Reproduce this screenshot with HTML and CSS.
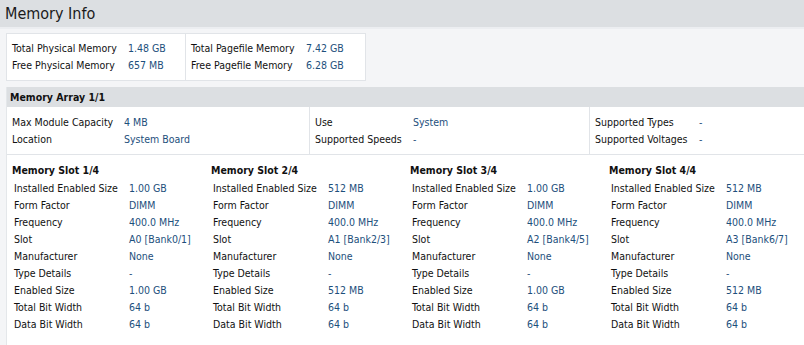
FILE: index.html
```html
<!DOCTYPE html>
<html lang="en">
<head>
    <meta charset="UTF-8">
    <title>Memory Info</title>
    <link rel="stylesheet" href="styles.css">
</head>
<body>
    <div class="title-bar">Memory Info</div>

    <div class="summary">
        <div class="summary-box">
            <div class="summary-cell">
                <span class="label">Total Physical Memory</span><span class="value">1.48 GB</span>
                <span class="label">Free Physical Memory</span><span class="value">657 MB</span>
            </div>
            <div class="summary-cell second">
                <span class="label">Total Pagefile Memory</span><span class="value">7.42 GB</span>
                <span class="label">Free Pagefile Memory</span><span class="value">6.28 GB</span>
            </div>
        </div>
    </div>

    <div class="content">
        <div class="section-head">Memory Array 1/1</div>
        <div class="array-body">
            <div class="array-col col-a">
                <span class="label">Max Module Capacity</span><span class="value">4 MB</span>
                <span class="label">Location</span><span class="value">System Board</span>
            </div>
            <div class="array-col col-b">
                <span class="label">Use</span><span class="value">System</span>
                <span class="label">Supported Speeds</span><span class="value">-</span>
            </div>
            <div class="array-col col-c">
                <span class="label">Supported Types</span><span class="value">-</span>
                <span class="label">Supported Voltages</span><span class="value">-</span>
            </div>
        </div>

        <div class="slots" id="slots"></div>
    </div>

    <script>
        const slots = [
            { size: '1.00 GB', slot: 'A0 [Bank0/1]' },
            { size: '512 MB', slot: 'A1 [Bank2/3]' },
            { size: '1.00 GB', slot: 'A2 [Bank4/5]' },
            { size: '512 MB', slot: 'A3 [Bank6/7]' }
        ];

        const slotsContainer = document.getElementById('slots');

        slots.forEach((s, i) => {
            const rows = [
                ['Installed Enabled Size', s.size],
                ['Form Factor', 'DIMM'],
                ['Frequency', '400.0 MHz'],
                ['Slot', s.slot],
                ['Manufacturer', 'None'],
                ['Type Details', '-'],
                ['Enabled Size', s.size],
                ['Total Bit Width', '64 b'],
                ['Data Bit Width', '64 b']
            ];
            const slot = document.createElement('div');
            slot.classList.add('slot');
            slot.innerHTML = `
                <div class="slot-head">Memory Slot ${i + 1}/${slots.length}</div>
                <div class="slot-rows">
                    ${rows.map(r => `<span class="label">${r[0]}</span><span class="value">${r[1]}</span>`).join('')}
                </div>
            `;
            slotsContainer.appendChild(slot);
        });
    </script>
</body>
</html>
```

FILE: styles.css
```css
body {
    margin: 0;
    padding: 0;
    font-family: 'DejaVu Sans Condensed', 'Liberation Sans', Arial, sans-serif;
    font-size: 10.5px;
    color: #111;
    background-color: #f4f5f7;
    width: 804px;
    height: 345px;
    overflow: hidden;
    display: flex;
    flex-direction: column;
}

.label {
    color: #111;
    white-space: nowrap;
}

.value {
    color: #1d4f7c;
    white-space: nowrap;
}

.title-bar {
    flex: none;
    height: 27px;
    line-height: 28px;
    padding-left: 5px;
    font-size: 16px;
    color: #1a1a1a;
    background-color: #dcdfe2;
}

.summary {
    flex: none;
    padding: 4px 6px 6px 6px;
    border-top: 2px solid #eceef1;
}

.summary-box {
    display: inline-flex;
    background-color: #fff;
    border: 1px solid #e1e4e8;
}

.summary-cell {
    display: grid;
    grid-template-columns: 116px 56px;
    grid-auto-rows: 17px;
    align-items: center;
    padding: 5px 0 7px 5px;
    width: 173px;
}

.summary-cell.second {
    grid-template-columns: 115px 58px;
    border-left: 1px solid #e1e4e8;
    width: 174px;
}

.content {
    flex: 1;
    margin-left: 6px;
    background-color: #fff;
    border-left: 1px solid #e4e7ea;
}

.section-head {
    height: 20px;
    line-height: 20px;
    padding-left: 3px;
    font-weight: bold;
    background-color: #dcdfe2;
}

.array-body {
    display: flex;
    border-bottom: 1px solid #e1e4e8;
}

.array-col {
    display: grid;
    grid-auto-rows: 17px;
    align-items: center;
    padding: 6px 0 7px 5px;
}

.col-a {
    grid-template-columns: 112px 180px;
    width: 297px;
}

.col-b {
    grid-template-columns: 98px 170px;
    width: 274px;
    border-left: 1px solid #e1e4e8;
}

.col-c {
    grid-template-columns: 104px 100px;
    border-left: 1px solid #e1e4e8;
}

.slots {
    display: grid;
    grid-template-columns: repeat(4, 199px);
    padding: 7px 0 0 5px;
}

.slot-head {
    height: 17px;
    line-height: 17px;
    font-weight: bold;
}

.slot-rows {
    display: grid;
    grid-template-columns: 115px 80px;
    grid-auto-rows: 17px;
    align-items: center;
    padding-left: 2px;
}
```
